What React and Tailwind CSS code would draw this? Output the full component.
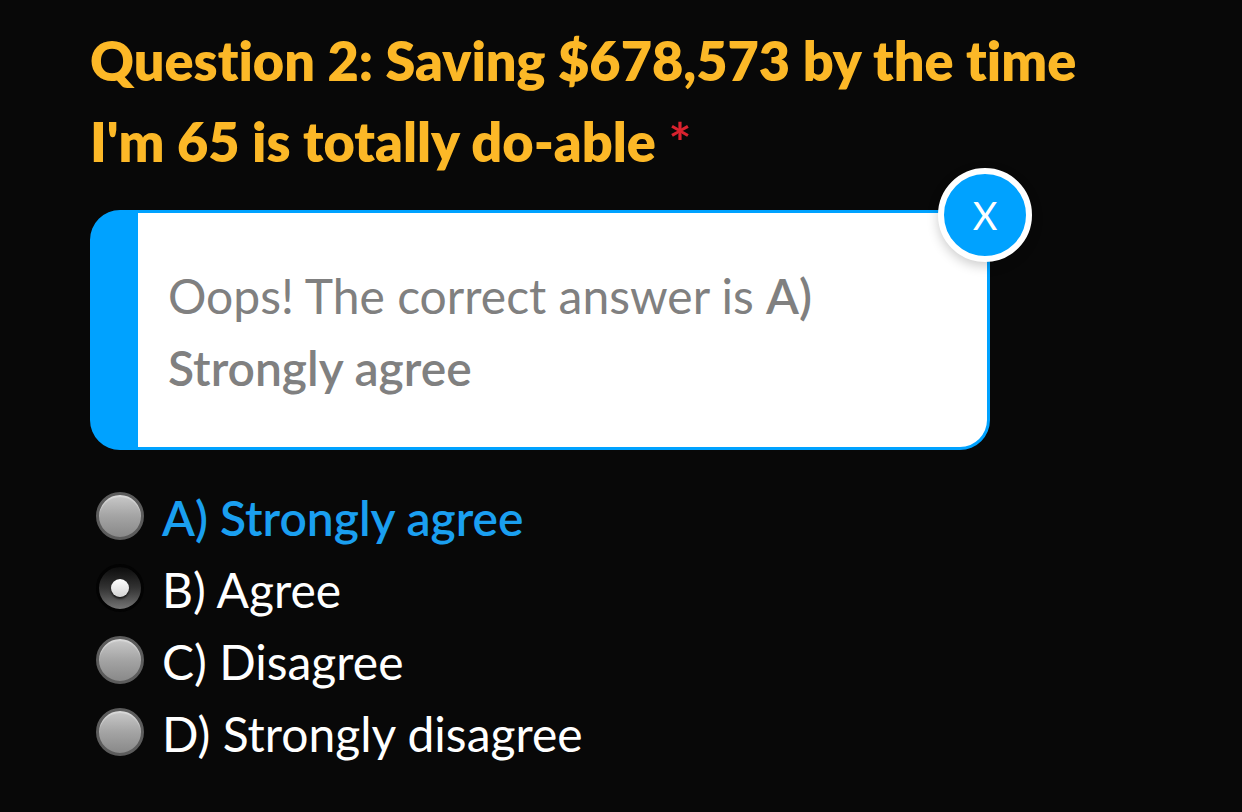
const options = ['A) Strongly agree', 'B) Agree', 'C) Disagree', 'D) Strongly disagree'];

const radioClass =
  "relative size-12 shrink-0 appearance-none rounded-full border-3 border-[#5c5c5c] bg-linear-to-b from-[#cfcfcf] via-[#a4a4a4] to-[#858585] bg-origin-border shadow-[inset_0_2px_1px_#ffffff55] outline-none focus-visible:ring-2 focus-visible:ring-sky-400 checked:border-[#030303] checked:bg-linear-to-b checked:from-[#080808] checked:via-[#333333] checked:to-[#808080] checked:shadow-none checked:after:absolute checked:after:inset-3 checked:after:rounded-full checked:after:bg-linear-to-b checked:after:from-white checked:after:to-[#d4d4d4] checked:after:shadow-[0_2px_2px_#000000aa] checked:after:content-['']";

export default function App() {
  return (
    <main className="min-h-screen bg-[#080808] px-[90px] pt-5 font-['Lato','Open_Sans',sans-serif] [font-variant-ligatures:none]">
      <fieldset className="min-w-0">
        <legend className="max-w-[1060px] text-[54px] leading-[81px] font-extrabold text-[#fcb827]">
          Question 2: Saving $678,573 by the time I'm 65 is totally do-able <span className="font-bold text-[#d9222e]">*</span>
        </legend>
        <div role="alert" className="relative mt-7 max-w-[900px] rounded-[30px] border-[3px] border-l-[48px] border-[#00a2ff] bg-white px-[30px] pt-[47px] pb-[43px] text-[48px] leading-[72px] text-[#808080]">
          <p className="max-w-[680px]">
            Oops! The correct answer is <strong className="font-semibold">A) Strongly agree</strong>
          </p>
          <button type="button" aria-label="Close" className="absolute -top-[45px] -right-[45px] size-[94px] rounded-full border-[6px] border-white bg-[#00a2ff] text-[38px] leading-none text-white shadow-[0_4px_12px_#00000033]">X</button>
        </div>
        <div className="mt-[30px] pl-1.5">
          {options.map((label, index) => (
            <label key={label} className={index === 0 ? 'flex h-[72px] items-center gap-[18px] text-[48px] font-semibold text-[#1a9ff0]' : 'flex h-[72px] items-center gap-[18px] text-[48px] text-white'}>
              <input type="radio" name="saving" defaultChecked={index === 1} className={radioClass} />
              <span className="pt-1">{label}</span>
            </label>
          ))}
        </div>
      </fieldset>
    </main>
  );
}
